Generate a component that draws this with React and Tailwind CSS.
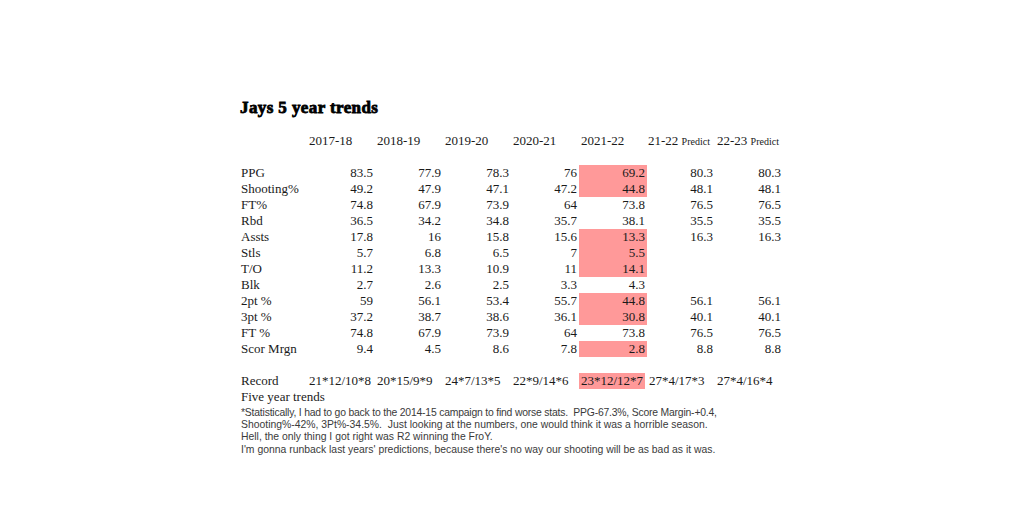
import React from 'react';

const headers = ['2017-18', '2018-19', '2019-20', '2020-21', '2021-22'];

// label, five seasons, two predictions, highlight the 2021-22 cell?
const rows = [
  ['PPG', '83.5', '77.9', '78.3', '76', '69.2', '80.3', '80.3', true],
  ['Shooting%', '49.2', '47.9', '47.1', '47.2', '44.8', '48.1', '48.1', true],
  ['FT%', '74.8', '67.9', '73.9', '64', '73.8', '76.5', '76.5', false],
  ['Rbd', '36.5', '34.2', '34.8', '35.7', '38.1', '35.5', '35.5', false],
  ['Assts', '17.8', '16', '15.8', '15.6', '13.3', '16.3', '16.3', true],
  ['Stls', '5.7', '6.8', '6.5', '7', '5.5', '', '', true],
  ['T/O', '11.2', '13.3', '10.9', '11', '14.1', '', '', true],
  ['Blk', '2.7', '2.6', '2.5', '3.3', '4.3', '', '', false],
  ['2pt %', '59', '56.1', '53.4', '55.7', '44.8', '56.1', '56.1', true],
  ['3pt %', '37.2', '38.7', '38.6', '36.1', '30.8', '40.1', '40.1', true],
  ['FT %', '74.8', '67.9', '73.9', '64', '73.8', '76.5', '76.5', false],
  ['Scor Mrgn', '9.4', '4.5', '8.6', '7.8', '2.8', '8.8', '8.8', true],
];

const record = ['21*12/10*8', '20*15/9*9', '24*7/13*5', '22*9/14*6', '23*12/12*7', '27*4/17*3', '27*4/16*4'];

const notes = [
  ['*Statistically, I had to go back to the 2014-15 campaign to find worse stats.  PPG-67.3%, Score Margin-+0.4,', 'tracking-[-0.2px]'],
  ['Shooting%-42%, 3Pt%-34.5%.  Just looking at the numbers, one would think it was a horrible season.', ''],
  ['Hell, the only thing I got right was R2 winning the FroY.', ''],
  ["I'm gonna runback last years' predictions, because there's no way our shooting will be as bad as it was.", ''],
];

const serif = "font-['Liberation_Serif','Times_New_Roman',serif]";

const App = () => {
  return (
    <div className={`w-[1024px] h-[531px] bg-white overflow-hidden pl-[240px] pt-[99px] text-[#1a1a1a] ${serif}`}>
      {/* Title */}
      <div className="h-[18px] leading-[18px] text-[17px] font-bold tracking-[0.4px] [-webkit-text-stroke:0.8px_#000] text-black">
        Jays 5 year trends
      </div>

      {/* Header row */}
      <div className="flex h-[16px] leading-[16px] text-[13px] mt-[16px]">
        <div className="w-[67px]" />
        {headers.map((h) => (
          <div key={h} className="w-[68px] pl-[2px]">{h}</div>
        ))}
        <div className="w-[68px] pl-[1px] whitespace-nowrap">21-22 <span className="text-[10px]">Predict</span></div>
        <div className="w-[68px] pl-[2px] whitespace-nowrap">22-23 <span className="text-[10px]">Predict</span></div>
      </div>

      <div className="h-[16px]" />

      {/* Stat rows */}
      {rows.map((r) => (
        <div key={r[0] + r[1]} className="flex h-[16px] leading-[16px] text-[13px]">
          <div className="w-[67px] pl-[1px] whitespace-nowrap">{r[0]}</div>
          {r.slice(1, 8).map((v, i) => (
            <div
              key={i}
              className={`w-[68px] pr-[2px] text-right ${i === 4 && r[8] ? 'bg-[#ff9999]' : ''}`}
            >
              {v}
            </div>
          ))}
        </div>
      ))}

      <div className="h-[16px]" />

      {/* Record row */}
      <div className="flex h-[16px] leading-[16px] text-[13px]">
        <div className="w-[67px] pl-[1px]">Record</div>
        {record.map((v, i) => (
          <div key={v} className="w-[68px] pl-[2px] whitespace-nowrap">
            <span className={i === 4 ? 'bg-[#ff9999] inline-block w-[66px] -ml-[2px] pl-[2px]' : ''}>{v}</span>
          </div>
        ))}
      </div>

      <div className="h-[15px] leading-[15px] text-[13px] pl-[1px]">Five year trends</div>

      {/* Notes */}
      <div className="font-['Liberation_Sans',Arial,sans-serif] text-[10.4px] leading-[12.2px] text-[#3a3a3a] pl-[1px] mt-[3px]">
        {notes.map(([n, cls]) => (
          <div key={n} className={`whitespace-pre ${cls}`}>{n}</div>
        ))}
      </div>
    </div>
  );
};

export default App;
